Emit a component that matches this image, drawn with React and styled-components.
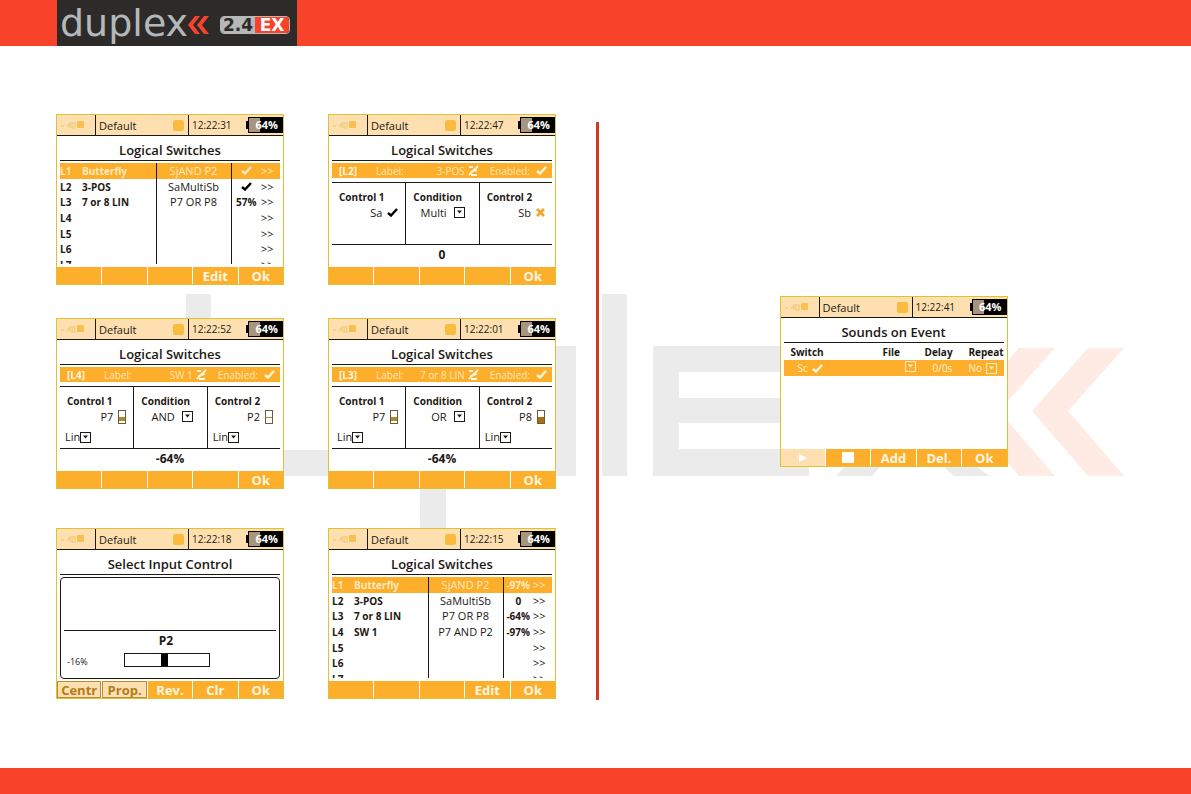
import React from "react";
import styled, { createGlobalStyle } from "styled-components";

const RED = "#f8432a";
const ORANGE = "#fdae2b";
const CREAM = "#fee0b0";
const INK = "#1c1814";

const GlobalStyle = createGlobalStyle`
  * {
    box-sizing: border-box;
  }
  body {
    margin: 0;
    background: #fff;
    color: ${INK};
    font-family: "Open Sans", "Noto Sans", sans-serif;
    font-size: 10px;
  }
  button, input, select {
    font: inherit;
    color: inherit;
    margin: 0;
    padding: 0;
    border: 0;
    background: none;
    border-radius: 0;
  }
`;

const Page = styled.div`
  position: relative;
  display: flex;
  flex-direction: column;
  min-height: 100vh;
  overflow: hidden;
`;

const Header = styled.header`
  display: flex;
  height: 46px;
  padding-left: 57px;
  background: ${RED};
`;

const Footer = styled.footer`
  height: 26px;
  background: ${RED};
`;

const Brand = styled.div`
  display: flex;
  align-items: center;
  width: 240px;
  padding-left: 3px;
  background: #2d2b2a;
`;

const Wordmark = styled.span`
  color: #b4b8b8;
  font: 38px/40px "DejaVu Sans", sans-serif;
`;

const BrandBadge = styled.span`
  display: flex;
  height: 18px;
  margin: 4px 0 0 10px;
  border: 1px solid #b4b8b8;
  border-radius: 4px;
  overflow: hidden;
  font: bold 17px/16px "DejaVu Sans", sans-serif;
`;

const BadgePart = styled.span`
  width: 34px;
  text-align: center;
  color: ${p => (p.$red ? "#fff" : "#2d2b2a")};
  background: ${p => (p.$red ? RED : "#b4b8b8")};
`;

const Watermark = styled.svg`
  position: absolute;
  left: 186px;
  top: 294px;
`;

const Main = styled.main`
  position: relative;
  display: flex;
  flex: 1;
  padding: 68px 0 68px 56px;
`;

const LeftColumn = styled.section`
  display: flex;
  flex-direction: column;
  width: 540px;
`;

const ScreenRow = styled.div`
  display: flex;
  gap: 44px;
  margin-bottom: ${p => p.$space || 0}px;
`;

const Divider = styled.div`
  width: 3px;
  margin-top: 8px;
  background: #cf3a22;
`;

const RightColumn = styled.section`
  display: flex;
  flex: 1;
  justify-content: center;
  align-items: flex-start;
  padding: 182px 3px 0 0;
`;

/* device screen */

const ScreenFrame = styled.article`
  display: flex;
  flex-direction: column;
  width: 228px;
  height: 171px;
  border: 1px solid #dfc132;
  background: #fff;
`;

const StatusBar = styled.div`
  display: flex;
  height: 21px;
  background: ${CREAM};
  border-bottom: 1px solid ${INK};
`;

const StatusCell = styled.div`
  display: flex;
  align-items: center;
  justify-content: space-between;
  width: ${p => p.$width}px;
  padding: 0 4px 0 3px;
  border-right: 1px solid ${INK};
  font-size: 11px;
`;

const Clock = styled.time`
  flex: 1;
  padding-left: 3px;
  line-height: 20px;
`;

const Memory = styled.i`
  width: 11px;
  height: 11px;
  border-radius: 2px;
  background: #fbbb3e;
`;

const Battery = styled.div`
  display: flex;
  align-items: center;
  align-self: center;
  width: 37px;
  height: 16px;

  &::before {
    content: "";
    width: 2px;
    height: 8px;
    background: #000;
  }
`;

const BatteryBody = styled.div`
  flex: 1;
  height: 16px;
  padding-right: 4px;
  border: 1px solid #000;
  background: linear-gradient(to right, #a8967c 11px, #000 11px);
  color: #fff;
  font-size: 11px;
  font-weight: 700;
  line-height: 14px;
  text-align: right;
`;

const Title = styled.h2`
  height: 25px;
  margin: 0 3px;
  padding-top: 3px;
  border-bottom: 1px solid ${INK};
  font-size: 13px;
  font-weight: 600;
  line-height: 22px;
  text-align: center;
`;

const Body = styled.div`
  flex: 1;
  min-height: 0;
  margin: 2px 3px 0;
`;

const SoftKeys = styled.div`
  display: grid;
  grid-template-columns: repeat(5, 1fr);
  gap: 1px;
  height: 17px;
  background: #fff;
`;

const SoftKey = styled.button`
  display: flex;
  align-items: center;
  justify-content: center;
  overflow: hidden;
  background: ${p => (p.$light || p.$framed ? CREAM : ORANGE)};
  border: ${p => (p.$framed ? "1px solid #b88a34" : "0")};
  color: ${p => (p.$framed ? "#b07c1c" : "#fff6e2")};
  font-size: 13px;
  font-weight: 700;
  line-height: 16px;
`;

/* switch list */

const ListClip = styled.div`
  height: 101px;
  overflow: hidden;
`;

const SwitchTable = styled.table`
  width: 100%;
  height: 110px;
  border-collapse: collapse;
  table-layout: fixed;
`;

const SwitchLine = styled.tr`
  background: ${p => (p.$active ? ORANGE : "transparent")};
  color: ${p => (p.$active ? "#ffe9c0" : INK)};
`;

const Cell = styled.td`
  width: ${p => p.$width || "auto"};
  padding: 0;
  border-left: ${p => (p.$ruled ? `1px solid ${INK}` : "0")};
  font-size: ${p => (p.$bold ? 10 : 11)}px;
  font-weight: ${p => (p.$bold ? 700 : 400)};
  line-height: 14px;
  text-align: ${p => p.$align || "left"};
  white-space: nowrap;
`;

/* switch editor */

const EditorBar = styled.div`
  display: flex;
  align-items: center;
  height: 15px;
  margin-bottom: 4px;
  padding: 0 5px 0 7px;
  background: ${ORANGE};
  color: #ffe6b8;
`;

const EditorId = styled.strong`
  width: 37px;
  color: #fff6e2;
`;

const LabelField = styled.label`
  display: flex;
  align-items: center;
  flex: 1;
`;

const LabelInput = styled.input`
  flex: 1;
  min-width: 0;
  width: 20px;
  padding-right: 3px;
  text-align: right;
`;

const EnabledField = styled.label`
  display: flex;
  align-items: center;
  gap: 6px;
  margin-left: 11px;
`;

const HiddenCheckbox = styled.input`
  position: absolute;
  opacity: 0;
  width: 1px;
  height: 1px;
`;

const Controls = styled.div`
  display: grid;
  grid-template-columns: repeat(3, 1fr);
  height: 63px;
  border: solid ${INK};
  border-width: 1px 0;
`;

const ControlBox = styled.div`
  display: flex;
  flex-direction: column;
  padding: 7px 7px 0 6px;

  & + & {
    border-left: 1px solid ${INK};
  }
`;

const ControlTitle = styled.strong`
  padding-left: 1px;
  line-height: 14px;
`;

const ControlValue = styled.div`
  display: flex;
  align-items: center;
  justify-content: flex-end;
  gap: 5px;
  height: 17px;
  padding-right: ${p => (p.$inset ? 7 : 0)}px;
  font-size: 11px;
`;

const CurveRow = styled.div`
  margin: 4px 0 0 -1px;
`;

const Picker = styled.span`
  display: inline-flex;
  align-items: center;
  gap: ${p => p.$gap || 0}px;
`;

const Select = styled.select`
  appearance: none;
  field-sizing: content;
  font-size: 11px;
  line-height: 16px;
`;

const Result = styled.output`
  display: block;
  font-size: 12px;
  font-weight: 700;
  line-height: 20px;
  text-align: center;
`;

/* input picker */

const InputPanel = styled.div`
  height: 102px;
  padding: 0 3px;
  border: 1px solid ${INK};
  border-radius: 4px;
`;

const InputPreview = styled.div`
  height: 53px;
  border-bottom: 1px solid ${INK};
`;

const InputName = styled.label`
  display: block;
  padding-right: 8px;
  font-size: 12px;
  font-weight: 700;
  line-height: 20px;
  text-align: center;
`;

const InputGauge = styled.div`
  display: grid;
  grid-template-columns: 60px 86px;
  align-items: center;
  font-size: 9px;
`;

const InputPercent = styled.span`
  padding: 4px 0 0 3px;
`;

const Range = styled.input`
  appearance: none;
  width: 86px;
  height: 14px;
  border: 1px solid ${INK};

  &::-webkit-slider-thumb {
    appearance: none;
    width: 7px;
    height: 12px;
    background: #000;
  }
`;

/* sounds */

const SoundTable = styled.table`
  width: 100%;
  border-collapse: collapse;
  table-layout: fixed;
`;

const SoundHead = styled.th`
  width: ${p => p.$width}px;
  padding: 0 0 0 ${p => p.$indent || 0}px;
  font-weight: 700;
  line-height: 15px;
  text-align: left;
`;

const SoundCell = styled.td`
  height: 16px;
  padding: 0 0 0 ${p => p.$indent || 0}px;
  background: ${ORANGE};
  color: #fff0d2;
  white-space: nowrap;
`;

const CheckIcon = ({ color = "#000" }) => (
  <svg width="11" height="9" viewBox="0 0 11 9">
    <path d="M1 5 L4 7.5 L10 1" fill="none" stroke={color} strokeWidth="2.4" />
  </svg>
);

const CrossIcon = () => (
  <svg width="9" height="9" viewBox="0 0 9 9">
    <path d="M1 1 L8 8 M8 1 L1 8" stroke="#eda62c" strokeWidth="2.8" />
  </svg>
);

const ArrowBox = ({ color = INK }) => (
  <svg width="11" height="11" viewBox="0 0 11 11">
    <rect x="0.5" y="0.5" width="10" height="10" fill="none" stroke={color} />
    <path d="M3 3.5 H8 L5.5 6.5 Z" fill={color} />
  </svg>
);

const EditIcon = () => (
  <svg width="11" height="11" viewBox="0 0 11 11">
    <path
      d="M1 2 H5 M10 1 L3 8 M1 10 L4 6 M3 10 H9 M6 6 L9 5"
      fill="none"
      stroke="#fff6e2"
      strokeWidth="1.8"
    />
  </svg>
);

const LeverIcon = ({ fill, level, base }) => (
  <svg width="8" height="14" viewBox="0 0 8 14">
    <rect x="0.5" y="0.5" width="7" height="13" fill="#fff" stroke="#6b5a3c" />
    <rect x="1" y={base - level} width="6" height={level} fill={fill} />
  </svg>
);

const levers = {
  P7: { fill: "#a98d2a", level: 4, base: 11 },
  P2: { fill: "#a98d2a", level: 1, base: 8 },
  P8: { fill: "#a86f12", level: 6, base: 13 }
};

const SignalIcon = () => (
  <svg width="26" height="10" viewBox="0 0 26 10">
    <path
      d="M1 6 H4 M7 7 L10 3 V8 M12 3 H15 V8 H12 Z"
      fill="none"
      stroke="#f4cd84"
      strokeWidth="1.5"
    />
    <rect x="17" y="1" width="7" height="7" rx="1" fill="#f9bf50" />
  </svg>
);

const ChevronMark = styled.svg`
  margin-top: 4px;
`;

const Chevrons = () => (
  <ChevronMark width="22" height="18" viewBox="0 0 22 18">
    <path d="M7 0 H12 L5 9 L12 18 H7 L0 9 Z" fill={RED} />
    <path d="M16 0 H21 L14 9 L21 18 H16 L9 9 Z" fill={RED} />
  </ChevronMark>
);

const Backdrop = () => (
  <Watermark width="940" height="236" viewBox="0 0 940 236" aria-hidden="true">
    <g fill="#ebebeb">
      <rect x="0" y="0" width="25" height="182" />
      <rect x="60" y="156" width="130" height="26" />
      <rect x="234" y="52" width="26" height="184" />
      <rect x="260" y="52" width="130" height="26" />
      <rect x="260" y="156" width="130" height="26" />
      <rect x="365" y="52" width="25" height="130" />
      <rect x="416" y="0" width="25" height="182" />
      <rect x="467" y="52" width="26" height="130" />
      <rect x="493" y="52" width="130" height="26" />
      <rect x="493" y="104" width="130" height="25" />
      <rect x="493" y="155" width="130" height="27" />
    </g>
    <path
      d="M650 182 L690 137 L708 157 L686 182 Z M735 137 L804 182 H768 L722 140 Z"
      fill="#ebebeb"
    />
    <path
      d="M833 54 H869 L813 117 L869 182 H833 L777 117 Z M902 54 H938 L882 117 L938 182 H902 L846 117 Z"
      fill="#fdebe4"
    />
  </Watermark>
);

const Screen = ({ title, time, keys, children }) => (
  <ScreenFrame>
    <StatusBar>
      <StatusCell $width={39}>
        <SignalIcon />
      </StatusCell>
      <StatusCell $width={93}>
        Default
        <Memory />
      </StatusCell>
      <Clock>{time}</Clock>
      <Battery>
        <BatteryBody>64%</BatteryBody>
      </Battery>
    </StatusBar>
    <Title>{title}</Title>
    <Body>{children}</Body>
    <SoftKeys>
      {keys.map((key, i) => (
        <SoftKey
          key={i}
          type="button"
          aria-label={key.name}
          $light={key.light}
          $framed={key.framed}
        >
          {key.icon || key.text}
        </SoftKey>
      ))}
    </SoftKeys>
  </ScreenFrame>
);

const SwitchList = ({ rows }) => (
  <ListClip>
    <SwitchTable>
      <tbody>
        {rows.map((row, i) => (
          <SwitchLine key={i} $active={i === 0}>
            <Cell $bold $width="22px">
              L{i + 1}
            </Cell>
            <Cell $bold $width="74px">
              {row.name}
            </Cell>
            <Cell $ruled $align="center" $width="75px">
              {row.rule}
            </Cell>
            <Cell $ruled $bold $align="center" $width="30px">
              {row.on ? (
                <CheckIcon color={i === 0 ? "#ffe9c0" : "#000"} />
              ) : (
                row.value
              )}
            </Cell>
            <Cell>{">>"}</Cell>
          </SwitchLine>
        ))}
      </tbody>
    </SwitchTable>
  </ListClip>
);

const Dropdown = ({ label, value, gap }) => (
  <Picker $gap={gap}>
    <Select aria-label={label} defaultValue={value}>
      <option>{value}</option>
    </Select>
    <ArrowBox />
  </Picker>
);

const Control = ({ title, source, icon, curve }) => (
  <ControlBox>
    <ControlTitle>{title}</ControlTitle>
    <ControlValue>
      {source}
      {icon || <LeverIcon {...levers[source]} />}
    </ControlValue>
    {curve && (
      <CurveRow>
        <Dropdown label={`${title} curve`} value="Lin" />
      </CurveRow>
    )}
  </ControlBox>
);

const SwitchEditor = ({ id, name, first, condition, second, result }) => (
  <>
    <EditorBar>
      <EditorId>[{id}]</EditorId>
      <LabelField>
        Label:
        <LabelInput type="text" defaultValue={name} />
        <EditIcon />
      </LabelField>
      <EnabledField>
        Enabled:
        <HiddenCheckbox type="checkbox" defaultChecked />
        <CheckIcon color="#fff6e2" />
      </EnabledField>
    </EditorBar>
    <Controls>
      <Control title="Control 1" {...first} />
      <ControlBox>
        <ControlTitle>Condition</ControlTitle>
        <ControlValue $inset>
          <Dropdown label="Condition" value={condition} gap={7} />
        </ControlValue>
      </ControlBox>
      <Control title="Control 2" {...second} />
    </Controls>
    <Result>{result}</Result>
  </>
);

const listKeys = [{}, {}, {}, { text: "Edit" }, { text: "Ok" }];
const okKeys = [{}, {}, {}, {}, { text: "Ok" }];
const inputKeys = [
  { text: "Centr", framed: true },
  { text: "Prop.", framed: true },
  { text: "Rev." },
  { text: "Clr" },
  { text: "Ok" }
];
const soundKeys = [
  {
    name: "Play",
    light: true,
    icon: (
      <svg width="10" height="10" viewBox="0 0 10 10">
        <path d="M1 1 L9 5 L1 9 Z" fill="#fff" />
      </svg>
    )
  },
  {
    name: "Stop",
    icon: (
      <svg width="12" height="11" viewBox="0 0 12 11">
        <rect width="12" height="11" fill="#fff" />
      </svg>
    )
  },
  { text: "Add" },
  { text: "Del." },
  { text: "Ok" }
];

const firstList = [
  { name: "Butterfly", rule: "SjAND P2", on: true },
  { name: "3-POS", rule: "SaMultiSb", on: true },
  { name: "7 or 8 LIN", rule: "P7 OR P8", value: "57%" },
  {},
  {},
  {},
  {}
];

const secondList = [
  { name: "Butterfly", rule: "SjAND P2", value: "-97%" },
  { name: "3-POS", rule: "SaMultiSb", value: "0" },
  { name: "7 or 8 LIN", rule: "P7 OR P8", value: "-64%" },
  { name: "SW 1", rule: "P7 AND P2", value: "-97%" },
  {},
  {},
  {}
];

const App = () => (
  <Page>
    <GlobalStyle />
    <Backdrop />
    <Header>
      <Brand>
        <Wordmark>duplex</Wordmark>
        <Chevrons />
        <BrandBadge>
          <BadgePart>2.4</BadgePart>
          <BadgePart $red>EX</BadgePart>
        </BrandBadge>
      </Brand>
    </Header>
    <Main>
      <LeftColumn>
        <ScreenRow $space={33}>
          <Screen title="Logical Switches" time="12:22:31" keys={listKeys}>
            <SwitchList rows={firstList} />
          </Screen>
          <Screen title="Logical Switches" time="12:22:47" keys={okKeys}>
            <SwitchEditor
              id="L2"
              name="3-POS"
              first={{ source: "Sa", icon: <CheckIcon /> }}
              condition="Multi"
              second={{ source: "Sb", icon: <CrossIcon /> }}
              result="0"
            />
          </Screen>
        </ScreenRow>
        <ScreenRow $space={39}>
          <Screen title="Logical Switches" time="12:22:52" keys={okKeys}>
            <SwitchEditor
              id="L4"
              name="SW 1"
              first={{ source: "P7", curve: true }}
              condition="AND"
              second={{ source: "P2", curve: true }}
              result="-64%"
            />
          </Screen>
          <Screen title="Logical Switches" time="12:22:01" keys={okKeys}>
            <SwitchEditor
              id="L3"
              name="7 or 8 LIN"
              first={{ source: "P7", curve: true }}
              condition="OR"
              second={{ source: "P8", curve: true }}
              result="-64%"
            />
          </Screen>
        </ScreenRow>
        <ScreenRow>
          <Screen title="Select Input Control" time="12:22:18" keys={inputKeys}>
            <InputPanel>
              <InputPreview />
              <InputName htmlFor="input-p2">P2</InputName>
              <InputGauge>
                <InputPercent>-16%</InputPercent>
                <Range
                  id="input-p2"
                  type="range"
                  min="-100"
                  max="100"
                  defaultValue="-6"
                />
              </InputGauge>
            </InputPanel>
          </Screen>
          <Screen title="Logical Switches" time="12:22:15" keys={listKeys}>
            <SwitchList rows={secondList} />
          </Screen>
        </ScreenRow>
      </LeftColumn>
      <Divider />
      <RightColumn>
        <Screen title="Sounds on Event" time="12:22:41" keys={soundKeys}>
          <SoundTable>
            <thead>
              <tr>
                <SoundHead $width={99} $indent={7}>
                  Switch
                </SoundHead>
                <SoundHead $width={42}>File</SoundHead>
                <SoundHead $width={44}>Delay</SoundHead>
                <SoundHead>Repeat</SoundHead>
              </tr>
            </thead>
            <tbody>
              <tr>
                <SoundCell $indent={14}>
                  <Picker $gap={4}>
                    Sc <CheckIcon color="#fff6e2" />
                  </Picker>
                </SoundCell>
                <SoundCell $indent={22}>
                  <Picker>
                    <ArrowBox color="#fff0d2" />
                  </Picker>
                </SoundCell>
                <SoundCell $indent={8}>0/0s</SoundCell>
                <SoundCell>
                  <Picker $gap={4}>
                    No <ArrowBox color="#fff0d2" />
                  </Picker>
                </SoundCell>
              </tr>
            </tbody>
          </SoundTable>
        </Screen>
      </RightColumn>
    </Main>
    <Footer />
  </Page>
);

export default App;
